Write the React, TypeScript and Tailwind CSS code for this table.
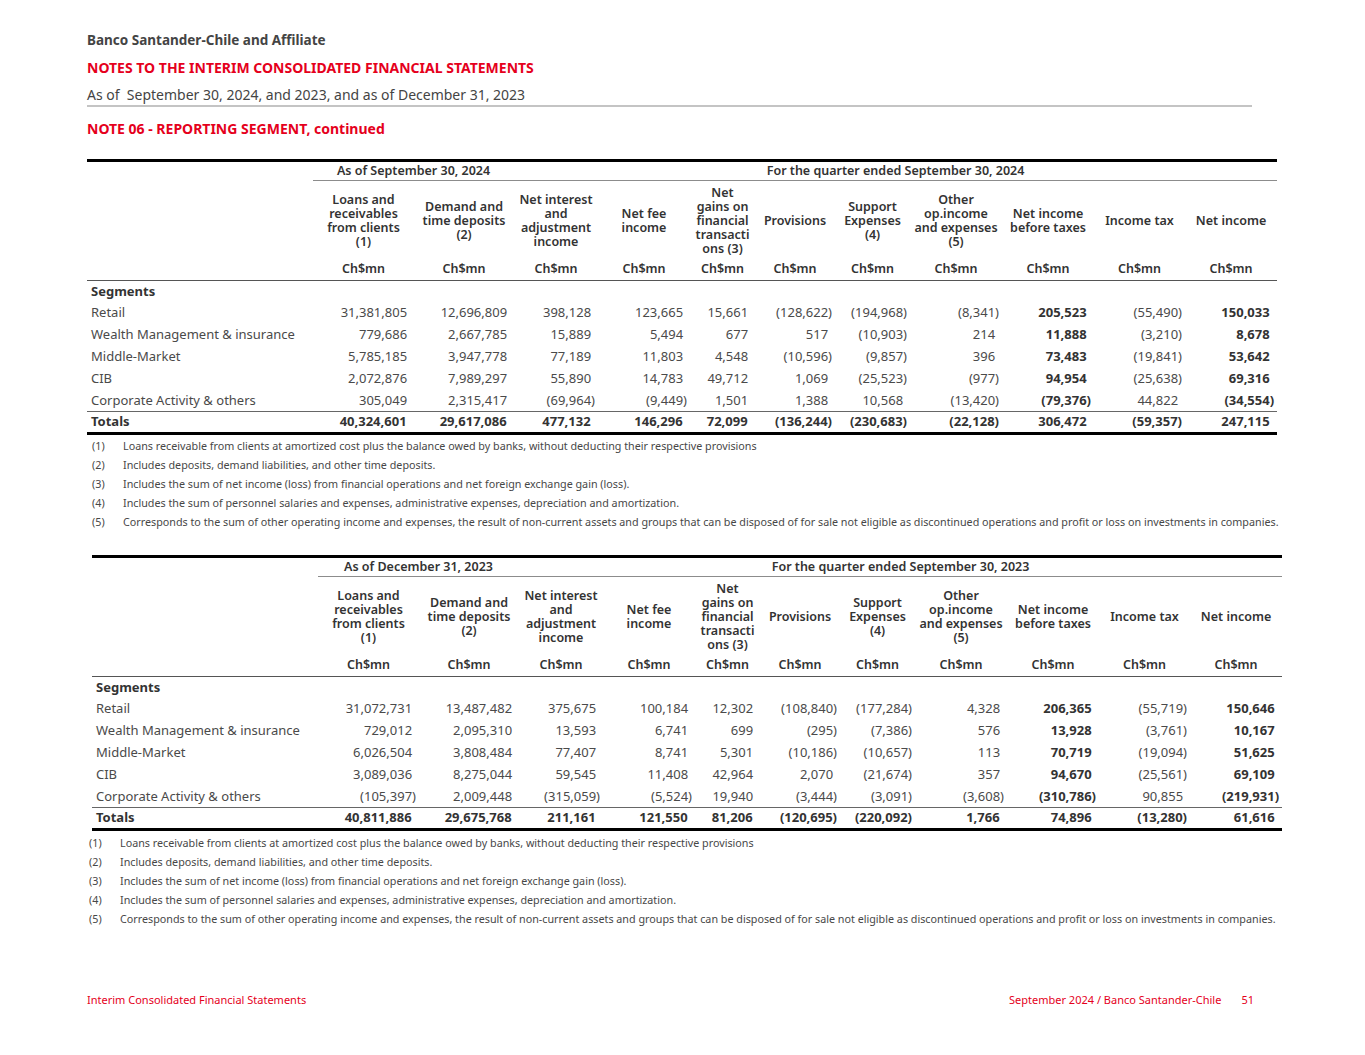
import React from "react";

const widths = [226, 101, 100, 84, 92, 65, 80, 75, 92, 92, 91, 92];

const headers: string[][] = [
  ["Loans and", "receivables", "from clients", "(1)"],
  ["Demand and", "time deposits", "(2)"],
  ["Net interest", "and", "adjustment", "income"],
  ["Net fee", "income"],
  ["Net", "gains on", "financial", "transacti", "ons (3)"],
  ["Provisions"],
  ["Support", "Expenses", "(4)"],
  ["Other", "op.income", "and expenses", "(5)"],
  ["Net income", "before taxes"],
  ["Income tax"],
  ["Net income"],
];

const boldCols = [8, 10];

type Row = { name: string; values: string[] };

const table2024: Row[] = [
  { name: "Retail", values: ["31,381,805", "12,696,809", "398,128", "123,665", "15,661", "(128,622)", "(194,968)", "(8,341)", "205,523", "(55,490)", "150,033"] },
  { name: "Wealth Management & insurance", values: ["779,686", "2,667,785", "15,889", "5,494", "677", "517", "(10,903)", "214", "11,888", "(3,210)", "8,678"] },
  { name: "Middle-Market", values: ["5,785,185", "3,947,778", "77,189", "11,803", "4,548", "(10,596)", "(9,857)", "396", "73,483", "(19,841)", "53,642"] },
  { name: "CIB", values: ["2,072,876", "7,989,297", "55,890", "14,783", "49,712", "1,069", "(25,523)", "(977)", "94,954", "(25,638)", "69,316"] },
  { name: "Corporate Activity & others", values: ["305,049", "2,315,417", "(69,964)", "(9,449)", "1,501", "1,388", "10,568", "(13,420)", "(79,376)", "44,822", "(34,554)"] },
];
const totals2024 = ["40,324,601", "29,617,086", "477,132", "146,296", "72,099", "(136,244)", "(230,683)", "(22,128)", "306,472", "(59,357)", "247,115"];

const table2023: Row[] = [
  { name: "Retail", values: ["31,072,731", "13,487,482", "375,675", "100,184", "12,302", "(108,840)", "(177,284)", "4,328", "206,365", "(55,719)", "150,646"] },
  { name: "Wealth Management & insurance", values: ["729,012", "2,095,310", "13,593", "6,741", "699", "(295)", "(7,386)", "576", "13,928", "(3,761)", "10,167"] },
  { name: "Middle-Market", values: ["6,026,504", "3,808,484", "77,407", "8,741", "5,301", "(10,186)", "(10,657)", "113", "70,719", "(19,094)", "51,625"] },
  { name: "CIB", values: ["3,089,036", "8,275,044", "59,545", "11,408", "42,964", "2,070", "(21,674)", "357", "94,670", "(25,561)", "69,109"] },
  { name: "Corporate Activity & others", values: ["(105,397)", "2,009,448", "(315,059)", "(5,524)", "19,940", "(3,444)", "(3,091)", "(3,608)", "(310,786)", "90,855", "(219,931)"] },
];
const totals2023 = ["40,811,886", "29,675,768", "211,161", "121,550", "81,206", "(120,695)", "(220,092)", "1,766", "74,896", "(13,280)", "61,616"];

const footnotes = [
  "Loans receivable from clients at amortized cost plus the balance owed by banks, without deducting their respective provisions",
  "Includes deposits, demand liabilities, and other time deposits.",
  "Includes the sum of net income (loss) from financial operations and net foreign exchange gain (loss).",
  "Includes the sum of personnel salaries and expenses, administrative expenses, depreciation and amortization.",
  "Corresponds to the sum of other operating income and expenses, the result of non-current assets and groups that can be disposed of for sale not eligible as discontinued operations and profit or loss on investments in companies.",
];

function Num({ v }: { v: string }) {
  // accounting style: positives leave room for the closing paren
  if (v.startsWith("(")) return <>{v}</>;
  return (
    <>
      {v}
      <span className="invisible">)</span>
    </>
  );
}

function SegmentTable({ asOf, quarter, rows, totals }: { asOf: string; quarter: string; rows: Row[]; totals: string[] }) {
  return (
    <table className="border-collapse table-fixed text-[13px] text-[#4a4a4a]" style={{ width: 1190 }}>
      <colgroup>
        {widths.map((w, i) => (
          <col key={i} style={{ width: w }} />
        ))}
      </colgroup>
      <tbody>
        <tr className="border-t-[3px] border-black">
          <td className="h-[20px] p-0"></td>
          <td colSpan={2} className="h-[20px] p-0 text-center text-[12.5px] font-semibold text-[#333] border-b border-[#8c8c8c] leading-none">
            {asOf}
          </td>
          <td colSpan={9} className="h-[20px] p-0 text-center text-[12.5px] font-semibold text-[#333] border-b border-[#8c8c8c] leading-none">
            {quarter}
          </td>
        </tr>
        <tr>
          <td className="h-[78px] p-0"></td>
          {headers.map((h, i) => (
            <td key={i} className="h-[78px] p-0 pt-[3px] text-center align-middle text-[12.5px] font-semibold leading-[14px] text-[#333] whitespace-nowrap">
              {h.map((line, j) => (
                <div key={j}>{line}</div>
              ))}
            </td>
          ))}
        </tr>
        <tr className="border-b border-[#555]">
          <td className="h-[22px] p-0"></td>
          {headers.map((_, i) => (
            <td key={i} className="h-[22px] p-0 text-center text-[12.5px] font-semibold text-[#333]">
              Ch$mn
            </td>
          ))}
        </tr>
        <tr>
          <td className="h-[21px] p-0 pl-[4px] font-bold text-[#333]">Segments</td>
          <td colSpan={11} className="p-0"></td>
        </tr>
        {rows.map((r, ri) => (
          <tr key={r.name} className={ri === rows.length - 1 ? "border-b border-[#666]" : ""}>
            <td className="h-[22px] p-0 pl-[4px] whitespace-nowrap">{r.name}</td>
            {r.values.map((v, i) => (
              <td key={i} className={"h-[22px] p-0 pr-[3px] text-right whitespace-nowrap " + (boldCols.includes(i) ? "font-bold text-[#333]" : "")}>
                <Num v={v} />
              </td>
            ))}
          </tr>
        ))}
        <tr className="border-b-[3px] border-black">
          <td className="h-[22px] p-0 pl-[4px] font-bold text-[#333]">Totals</td>
          {totals.map((v, i) => (
            <td key={i} className="h-[22px] p-0 pr-[3px] text-right font-bold text-[#333] whitespace-nowrap">
              <Num v={v} />
            </td>
          ))}
        </tr>
      </tbody>
    </table>
  );
}

function Footnotes({ className }: { className: string }) {
  return (
    <div className={"text-[10.75px] leading-[19px] text-[#474747] " + className}>
      {footnotes.map((f, i) => (
        <div key={i} className="flex whitespace-nowrap">
          <span className="w-[31px] shrink-0">({i + 1})</span>
          <span>{f}</span>
        </div>
      ))}
    </div>
  );
}

export default function App() {
  return (
    <div className="w-[1365px] h-[1055px] bg-white pl-[87px] pt-[30px] overflow-hidden" style={{ fontFamily: '"Noto Sans", "Open Sans", sans-serif' }}>
      <div className="text-[13.5px] leading-[20px] font-bold text-[#444]">Banco Santander-Chile and Affiliate</div>
      <div className="mt-[8px] text-[14px] leading-[20px] font-bold text-[#e5001c]">NOTES TO THE INTERIM CONSOLIDATED FINANCIAL STATEMENTS</div>
      <div className="mt-[7px] text-[14px] leading-[20px] text-[#444]">As of&nbsp; September 30, 2024, and 2023, and as of December 31, 2023</div>
      <div className="h-[2px] w-[1165px] bg-[#c4c4c4]"></div>
      <div className="mt-[12px] text-[14px] leading-[20px] font-bold text-[#e5001c]">NOTE 06 - REPORTING SEGMENT, continued</div>

      <div className="mt-[20px]">
        <SegmentTable asOf="As of September 30, 2024" quarter="For the quarter ended  September 30, 2024" rows={table2024} totals={totals2024} />
      </div>
      <Footnotes className="mt-[2px] pl-[5px]" />

      <div className="mt-[23px] ml-[5px]">
        <SegmentTable asOf="As of December 31, 2023" quarter="For the quarter ended  September 30, 2023" rows={table2023} totals={totals2023} />
      </div>
      <Footnotes className="mt-[3px] pl-[2px]" />

      <div className="mt-[64px] w-[1167px] flex justify-between text-[11px] leading-[14px] text-[#e5001c]">
        <span>Interim Consolidated Financial Statements</span>
        <span>
          September 2024 / Banco Santander-Chile<span className="ml-[20px]">51</span>
        </span>
      </div>
    </div>
  );
}
